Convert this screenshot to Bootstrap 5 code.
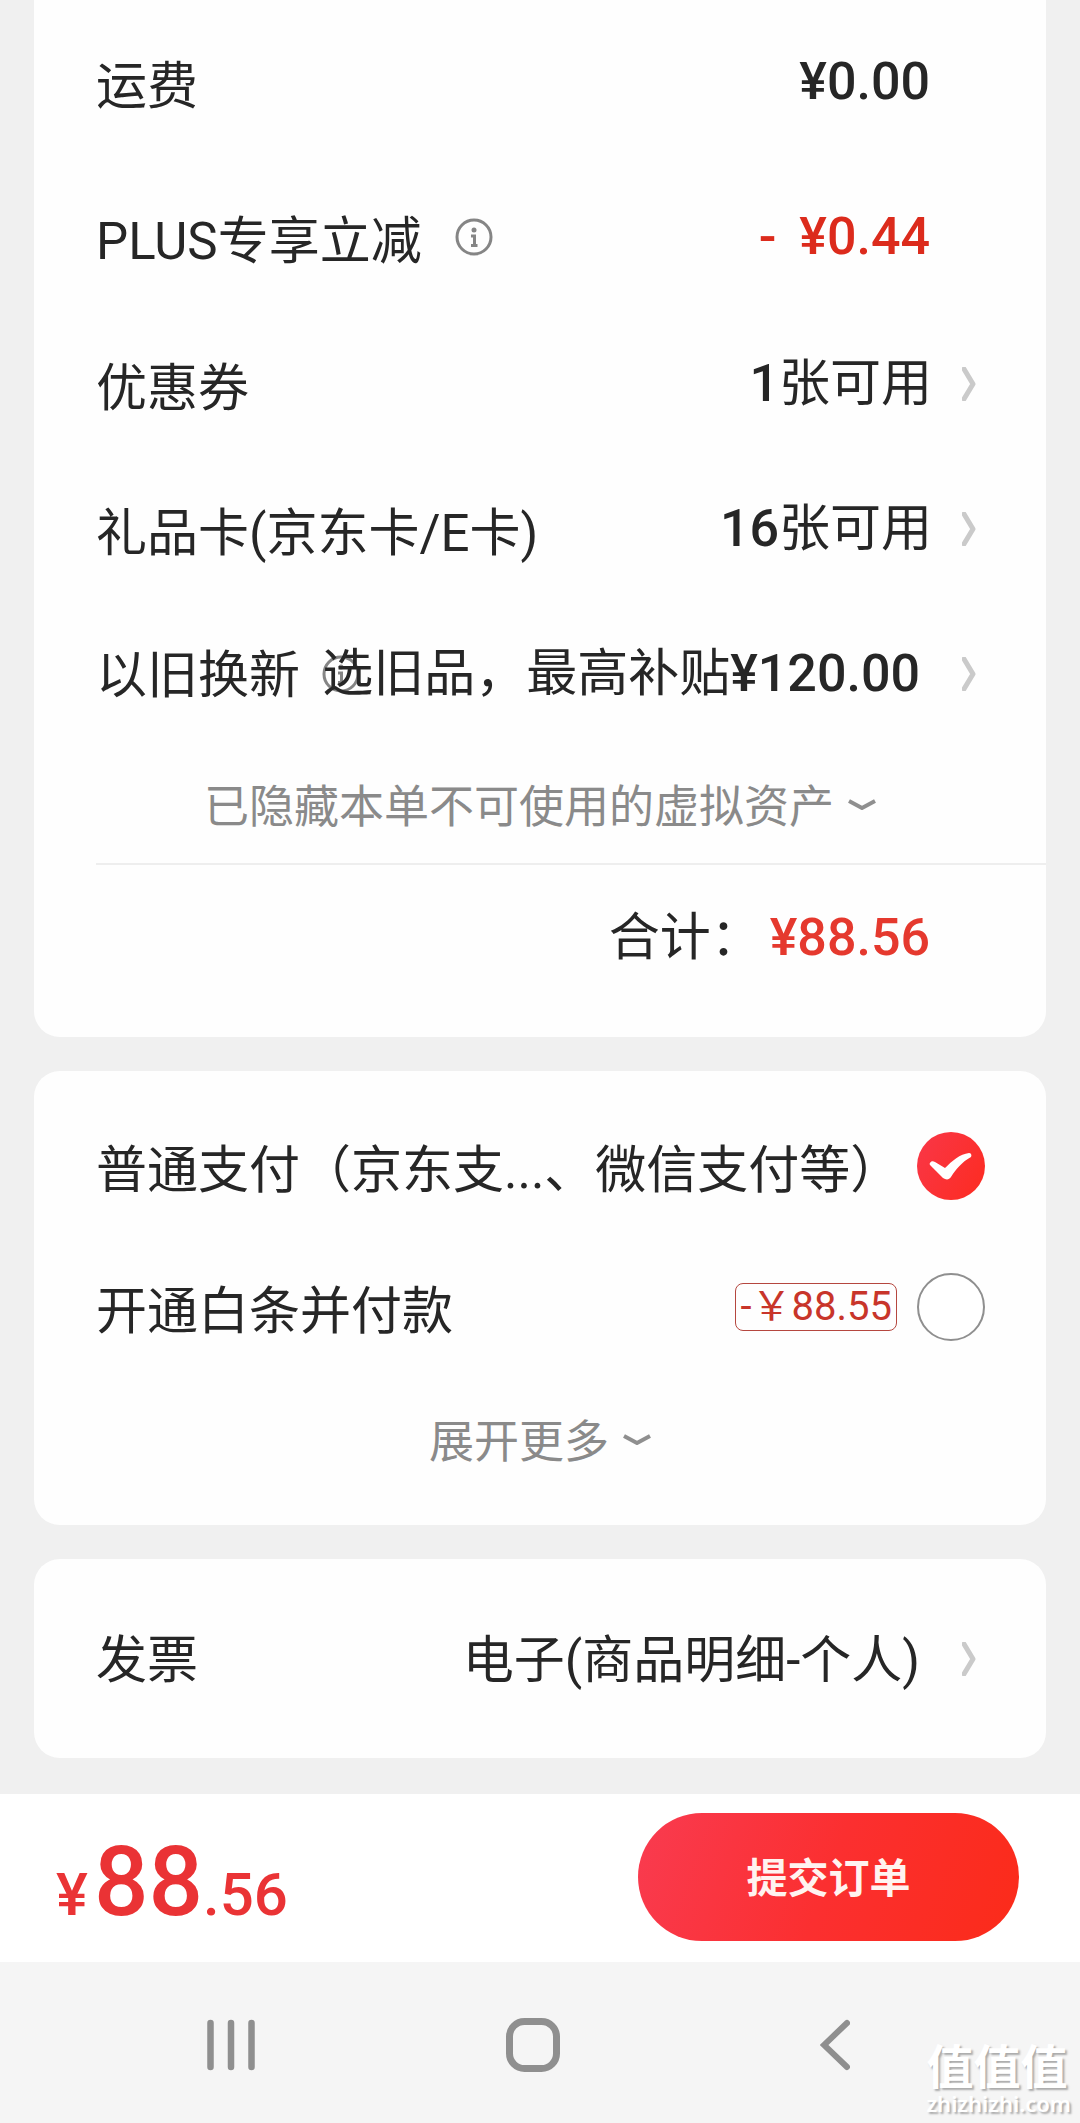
<!DOCTYPE html>
<html lang="zh-CN">
<head>
<meta charset="utf-8">
<meta name="viewport" content="width=device-width, initial-scale=1">
<title>确认订单</title>
<link href="https://cdn.jsdelivr.net/npm/bootstrap@5.3.0/dist/css/bootstrap.min.css" rel="stylesheet">
<style>
  body { background: #f0f0f0; color: #262626; font-family: Roboto, "Noto Sans CJK SC", sans-serif; font-size: 51px; line-height: 60px; }
  a, a:hover { color: inherit; text-decoration: none; }
  svg { display: block; flex: none; }
  .page { min-height: 100vh; }
  .sheet { background: #fefefe; border: 0; border-radius: 26px; margin: 0 34px 34px; padding-left: 62px; }
  .sheet-first { border-top-left-radius: 0; border-top-right-radius: 0; padding-bottom: 28px; }
  .sheet-pay { padding-top: 24px; padding-bottom: 22px; }
  .sheet-last { margin-bottom: 36px; }
  .line { min-height: 145px; padding-right: 116px; white-space: nowrap; }
  .line-top { min-height: 163px; }
  .line-plus { min-height: 148px; }
  .line-link { padding-right: 70px; }
  .line-pay { min-height: 141px; padding-right: 61px; }
  .line-invoice { min-height: 199px; }
  .caption { padding-top: 10px; }
  .caption-even { padding-top: 4px; }
  .info { margin-left: 33px; }
  .tail { gap: 30px; }
  .tail-wide { gap: 42px; }
  .swap { min-width: 0; width: 0; }
  .swap .info { margin-left: 22px; }
  .money { font-size: 52px; font-weight: 500; }
  .minus { margin-right: 10px; }
  .off { color: #dc2b1c; }
  .sum { color: #e5392e; }
  .more { min-height: 117px; margin-right: 62px; font-size: 45px; line-height: 52px; color: #8a8a8a; background: none; border: 0; padding: 0; gap: 14px; }
  .more span { padding-top: 6px; }
  .more-pay { min-height: 126px; }
  .rule { border-top: 2px solid #eee; }
  .total { min-height: 144px; padding-top: 2px; padding-right: 116px; gap: 8px; }
  .tag { font-size: 40px; line-height: 46px; color: #c8352a; border: 1px solid #b5473f; border-radius: 8px; padding: 0 4px; margin-right: 20px; }
  .pick.form-check-input { width: 68px; height: 68px; margin: 0; float: none; border: 2px solid #8f8f8f; flex: none; box-shadow: none; }
  .pick.form-check-input:checked { border: 0; background-color: #fc2f30; background-size: 100% 100%;
    background-image: url("data:image/svg+xml,%3Csvg xmlns='http://www.w3.org/2000/svg' viewBox='0 0 68 68'%3E%3Cpath d='M13 31c1-2 3-2 5-1l10 6C35 29 43 22 52 21c2 0 3 2 2 4-9 5-15 12-20 20-2 3-5 3-8 1L14 34c-1-1-2-2-1-3z' fill='%23fff'/%3E%3C/svg%3E"), linear-gradient(120deg, #f93748, #fd2b20); }
  .paybar { background: #fff; min-height: 168px; padding: 19px 61px 21px 56px; }
  .grand { color: #ea3335; font-weight: 500; font-size: 60px; line-height: 80px; padding-top: 22px; }
  .grand b { font-size: 96px; font-weight: 500; margin-left: 6px; }
  .submit, .submit:hover { width: 381px; height: 128px; padding: 12px 0 6px; border: 0; border-radius: 64px; color: #fff3f0; font-size: 41px; font-weight: 700; background: linear-gradient(110deg, #f93b50, #fb2f30 50%, #fb2b19); }
  .sysnav { background: #f5f5f5; flex: 1 0 auto; min-height: 160px; padding: 56px 215px 0 201px; color: #8f8f8f; }
  .sysnav button { background: none; border: 0; padding: 0; color: inherit; width: 60px; }
  .stamp { right: 9px; bottom: 8px; color: #fff; text-shadow: 2px 2px 2px #aaa; font-weight: 700; font-size: 47px; line-height: 46px; }
  .stamp span { font-family: "Noto Sans", sans-serif; font-weight: 600; font-size: 22px; line-height: 24px; }
</style>
</head>
<body>
<svg class="d-none" xmlns="http://www.w3.org/2000/svg">
  <symbol id="go" viewBox="0 0 14 34"><path d="M2 2l9 15-9 15" fill="none" stroke="#cacaca" stroke-width="5" stroke-linecap="round" stroke-linejoin="round"/></symbol>
  <symbol id="down" viewBox="0 0 28 12"><path d="M1 2l13 7 13-7" fill="none" stroke="#8f8f8f" stroke-width="4" stroke-linejoin="round"/></symbol>
  <symbol id="info" viewBox="0 0 38 38"><circle cx="19" cy="19" r="17" fill="none" stroke="#858585" stroke-width="3"/><circle cx="19" cy="12" r="2.5" fill="#858585"/><path d="M16 18h3.500v9M16 27.500h6.500" fill="none" stroke="#858585" stroke-width="3"/></symbol>
</svg>

<main class="page d-flex flex-column">
  <section class="card sheet sheet-first">
    <div class="line line-top d-flex align-items-center justify-content-between">
      <span class="caption">运费</span><span class="money">¥0.00</span>
    </div>
    <div class="line line-plus d-flex align-items-center">
      <span class="caption">PLUS专享立减</span>
      <svg class="info" width="38" height="38" role="img" aria-label="说明"><use href="#info"/></svg>
      <span class="money off ms-auto"><span class="minus">-</span> ¥0.44</span>
    </div>
    <a href="#" class="line line-link d-flex align-items-center justify-content-between">
      <span class="caption">优惠券</span>
      <span class="tail d-flex align-items-center"><span><span class="money">1</span>张可用</span><svg width="14" height="34"><use href="#go"/></svg></span>
    </a>
    <a href="#" class="line line-link d-flex align-items-center justify-content-between">
      <span class="caption">礼品卡(京东卡/E卡)</span>
      <span class="tail d-flex align-items-center"><span><span class="money">16</span>张可用</span><svg width="14" height="34"><use href="#go"/></svg></span>
    </a>
    <a href="#" class="line line-link d-flex align-items-center justify-content-between">
      <span class="swap d-flex align-items-center"><span class="caption-even">以旧换新</span><svg class="info" width="38" height="38"><use href="#info"/></svg></span>
      <span class="tail tail-wide d-flex align-items-center"><span>选旧品，最高补贴<span class="money">¥120.00</span></span><svg width="14" height="34"><use href="#go"/></svg></span>
    </a>
    <button type="button" class="more d-flex align-items-center justify-content-center"><span>已隐藏本单不可使用的虚拟资产</span><svg width="28" height="12"><use href="#down"/></svg></button>
    <div class="rule"></div>
    <div class="total d-flex align-items-center justify-content-end">
      <span>合计：</span><span class="money sum">¥88.56</span>
    </div>
  </section>

  <section class="card sheet sheet-pay">
    <div class="line line-pay d-flex align-items-center justify-content-between">
      <label class="caption" for="pay-normal">普通支付（京东支...、微信支付等）</label>
      <input class="form-check-input pick" type="radio" name="pay" id="pay-normal" checked>
    </div>
    <div class="line line-pay d-flex align-items-center">
      <label class="caption" for="pay-baitiao">开通白条并付款</label>
      <span class="tag ms-auto">-￥88.55</span>
      <input class="form-check-input pick" type="radio" name="pay" id="pay-baitiao">
    </div>
    <button type="button" class="more more-pay d-flex align-items-center justify-content-center"><span>展开更多</span><svg width="28" height="12"><use href="#down"/></svg></button>
  </section>

  <section class="card sheet sheet-last">
    <a href="#" class="line line-link line-invoice d-flex align-items-center justify-content-between">
      <span class="caption-even">发票</span>
      <span class="tail tail-wide d-flex align-items-center"><span class="caption-even">电子(商品明细-个人)</span><svg width="14" height="34"><use href="#go"/></svg></span>
    </a>
  </section>

  <div class="paybar d-flex align-items-center justify-content-between">
    <div class="grand">¥<b>88</b>.56</div>
    <button type="button" class="btn submit">提交订单</button>
  </div>

  <nav class="sysnav position-relative d-flex align-items-start justify-content-between">
    <button type="button" class="d-flex justify-content-center" aria-label="最近任务"><svg width="48" height="54" viewBox="0 0 48 54"><path d="M3.500 5v44M24 5v44M44.500 5v44" stroke="currentColor" stroke-width="6.500" stroke-linecap="round"/></svg></button>
    <button type="button" class="d-flex justify-content-center" aria-label="主屏幕"><svg width="54" height="54" viewBox="0 0 54 54"><rect x="3.500" y="3.500" width="47" height="47" rx="15" fill="none" stroke="currentColor" stroke-width="7"/></svg></button>
    <button type="button" class="d-flex justify-content-center" aria-label="返回"><svg width="30" height="54" viewBox="0 0 30 54"><path d="M27 5L4 27l23 22" fill="none" stroke="currentColor" stroke-width="6" stroke-linecap="round"/></svg></button>
    <div class="stamp position-absolute d-flex flex-column">值值值<span>zhizhizhi.com</span></div>
  </nav>
</main>
<script src="https://cdn.jsdelivr.net/npm/bootstrap@5.3.0/dist/js/bootstrap.bundle.min.js"></script>
</body>
</html>
